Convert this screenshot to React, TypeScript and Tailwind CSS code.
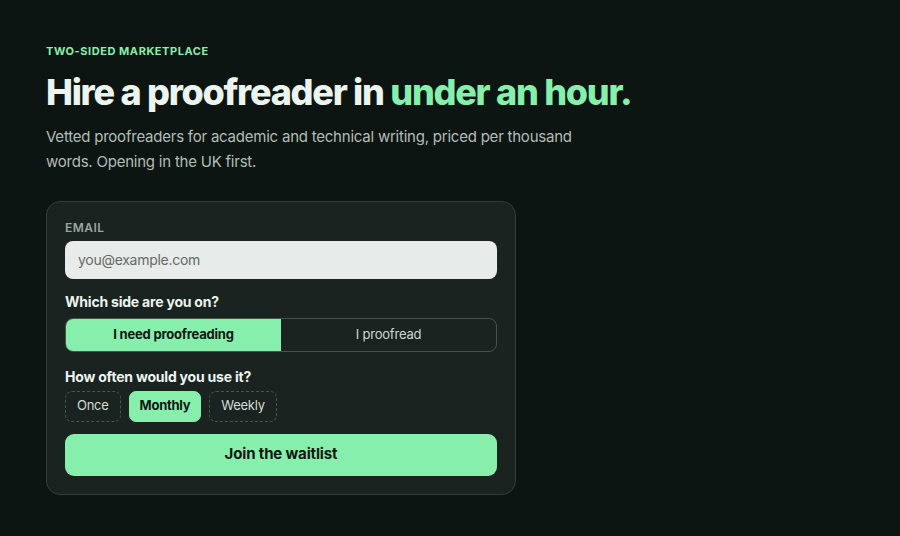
import { useState } from "react";

const sides = ["I need proofreading", "I proofread"];
const frequencies = ["Once", "Monthly", "Weekly"];

export default function App() {
  const [side, setSide] = useState(sides[0]);
  const [freq, setFreq] = useState("Monthly");
  const [email, setEmail] = useState("");

  return (
    <div
      className="min-h-[536px] w-full bg-[#0c1512] px-[46px] pt-[43px] pb-10 text-[#ecf4ef]"
      style={{ fontFamily: "Inter, 'Noto Sans', sans-serif" }}
    >
      <p className="text-[11px] font-bold uppercase tracking-[0.05em] text-[#86efac]">
        Two-sided marketplace
      </p>
      <h1 className="mt-[10px] text-[36px] leading-[44px] font-extrabold tracking-[-0.035em]">
        Hire a proofreader in <span className="text-[#86efac]">under an hour.</span>
      </h1>
      <p className="mt-[10px] max-w-[550px] text-[15px] leading-[25px] tracking-[-0.015em] text-[#b3bdb8]">
        Vetted proofreaders for academic and technical writing, priced per thousand words. Opening in
        the UK first.
      </p>

      <form
        className="mt-[27px] flex w-[470px] flex-col rounded-[14px] border border-[#323c38] bg-[#1a2320] px-[18px] pt-[19px] pb-[18px]"
        onSubmit={(e) => e.preventDefault()}
      >
        <label className="text-[12px] leading-[14px] font-semibold tracking-[0.04em] text-[#9aa5a0]">
          EMAIL
        </label>
        <input
          type="email"
          value={email}
          onChange={(e) => setEmail(e.target.value)}
          placeholder="you@example.com"
          className="mt-[6px] h-[38px] w-full rounded-[8px] bg-[#e7ebe9] px-[13px] text-[14px] tracking-[-0.02em] text-[#1a2320] placeholder:text-[#5f6b66] outline-none"
        />

        <p className="mt-[14px] text-[14px] leading-[17px] font-bold tracking-[-0.015em]">
          Which side are you on?
        </p>
        <div className="mt-[8px] flex h-[34px] overflow-hidden rounded-[8px] border border-[#47524d]">
          {sides.map((s) => (
            <button
              key={s}
              type="button"
              onClick={() => setSide(s)}
              className={
                side === s
                  ? "flex-1 bg-[#86efac] text-[13px] font-bold tracking-[-0.015em] text-[#0c1512]"
                  : "flex-1 text-[13px] tracking-[-0.015em] text-[#cfd6d2]"
              }
            >
              {s}
            </button>
          ))}
        </div>

        <p className="mt-[16px] text-[14px] leading-[17px] font-bold tracking-[-0.015em]">
          How often would you use it?
        </p>
        <div className="mt-[6px] flex gap-[8px]">
          {frequencies.map((f) => (
            <button
              key={f}
              type="button"
              onClick={() => setFreq(f)}
              className={
                freq === f
                  ? "h-[31px] rounded-[7px] border border-[#86efac] bg-[#86efac] px-[10px] text-[13px] font-bold tracking-[-0.02em] text-[#0c1512]"
                  : "h-[31px] rounded-[7px] border border-dashed border-[#4a5550] px-[11px] text-[13px] tracking-[-0.02em] text-[#d5dcd8]"
              }
            >
              {f}
            </button>
          ))}
        </div>

        <button
          type="submit"
          className="mt-[12px] h-[42px] w-full rounded-[9px] bg-[#86efac] text-[15px] font-bold tracking-[-0.01em] text-[#0c1512]"
        >
          Join the waitlist
        </button>
      </form>
    </div>
  );
}
